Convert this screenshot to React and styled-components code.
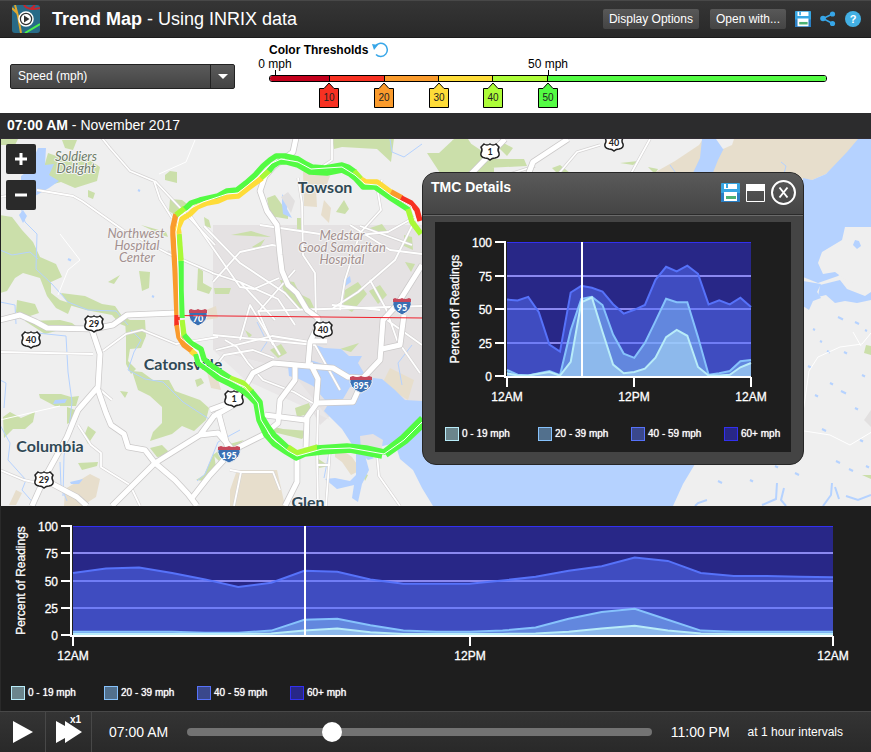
import React, { useState } from "react";
import styled, { createGlobalStyle } from "styled-components";

const GlobalStyle = createGlobalStyle`
  * { box-sizing: border-box; }
  body { margin: 0; background: #1e1e1e; font-family: "Liberation Sans", Arial, sans-serif; font-size: 12px; color: #fff; }
  button, select, input { font-family: inherit; margin: 0; }
`;

const Page = styled.div`
  display: flex;
  flex-direction: column;
  min-height: 100vh;
`;

const TopBar = styled.header`
  display: flex;
  align-items: center;
  height: 38px;
  padding: 0 10px 0 12px;
  background: linear-gradient(#353535, #292929);
  border-top: 1px solid #484848;
  border-bottom: 1px solid #1c1c1c;
`;

const Title = styled.h1`
  flex: 1;
  margin: 0 0 0 12px;
  font-size: 18px;
  white-space: nowrap;
  span { font-weight: 400; }
`;

const HeaderActions = styled.div`
  display: flex;
  gap: 11px;
  margin-right: 9px;
`;

const ToolButton = styled.button`
  height: 20px;
  padding: 0 6px;
  border: 0;
  border-radius: 2px;
  background: linear-gradient(#585858, #444);
  color: #fff;
  font-size: 12px;
  white-space: nowrap;
`;

const IconButton = styled.button`
  display: flex;
  padding: 0;
  border: 0;
  background: none;
`;

const HeaderIcons = styled.div`
  display: flex;
  align-items: center;
  gap: 9px;
`;

const Controls = styled.section`
  display: flex;
  height: 75px;
  padding: 0 44px 0 10px;
  background: #fff;
  color: #000;
`;

const Picker = styled.label`
  display: grid;
  grid-template-columns: 1fr 24px;
  align-self: flex-start;
  flex: none;
  width: 225px;
  height: 25px;
  margin: 26px 34px 0 0;
  border: 1px solid #222;
  border-radius: 2px;
  background: linear-gradient(#5a5a5a, #444);
`;

const PickerSelect = styled.select`
  grid-area: 1 / 1 / 2 / 3;
  appearance: none;
  padding: 0 7px 2px;
  border: 0;
  background: none;
  color: #fff;
  font-size: 12px;
`;

const PickerArrow = styled.span`
  grid-area: 1 / 2 / 2 / 3;
  display: flex;
  align-items: center;
  justify-content: center;
  border-left: 1px solid #222;
  pointer-events: none;
`;

const Thresholds = styled.div`
  flex: 1;
  min-width: 0;
  padding-top: 4px;
`;

const ThresholdTitle = styled.div`
  display: flex;
  align-items: center;
  gap: 4px;
  height: 16px;
  font-weight: 700;
`;

const scaleColumns = `grid-template-columns: 60fr 55fr 55fr 54fr 55fr 279fr;`;

const TickRow = styled.div`
  display: grid;
  ${scaleColumns}
  height: 17px;
`;

const ScaleTick = styled.div`
  grid-column: ${(p) => p.$column};
  justify-self: ${(p) => (p.$start ? "start" : "end")};
  display: flex;
  flex-direction: column;
  align-items: center;
  width: 48px;
  margin: ${(p) => (p.$start ? "0 0 0 -18px" : "0 -24px 0 0")};
  line-height: 12px;
  white-space: nowrap;
  &::after { content: ""; width: 1px; height: 5px; background: #000; }
`;

const ScaleBar = styled.div`
  display: grid;
  ${scaleColumns}
  height: 7px;
  border: 1px solid #000;
  border-radius: 3px;
  overflow: hidden;
`;

const Segment = styled.div`
  background: ${(p) => p.$color};
  border-right: ${(p) => (p.$last ? "0" : "1px solid #000")};
`;

const MarkerRow = styled.div`
  display: grid;
  ${scaleColumns}
`;

const Marker = styled.button`
  justify-self: end;
  display: grid;
  place-items: center;
  width: 20px;
  height: 26px;
  margin-right: -10px;
  padding: 0;
  border: 0;
  background: none;
  svg, span { grid-area: 1 / 1; }
  span { padding-top: 4px; font-size: 10px; color: #222; }
`;

const DateBar = styled.div`
  height: 26px;
  padding-left: 7px;
  background: #2c2c2d;
  border-bottom: 1px solid #332e35;
  font-size: 14px;
  line-height: 25px;
`;

const MapArea = styled.main`
  position: relative;
  display: flex;
  background: #efefef;
  border-left: 1px solid #222;
`;

const MapDrawing = styled.svg`
  display: block;
  width: 100%;
  font-family: Lato, sans-serif;
`;

const ZoomControls = styled.div`
  position: absolute;
  top: 5px;
  left: 5px;
  display: flex;
  flex-direction: column;
  gap: 6px;
`;

const ZoomButton = styled.button`
  display: grid;
  place-items: center;
  width: 30px;
  height: 30px;
  padding: 0;
  border: 0;
  border-radius: 2px;
  background: #2a2a2a;
`;

const Dialog = styled.section`
  position: absolute;
  top: 33px;
  right: 67px;
  width: 382px;
  border: 1px solid #262626;
  border-radius: 14px;
  background: #444;
`;

const DialogHeader = styled.header`
  display: flex;
  align-items: flex-start;
  height: 43px;
  padding: 7px 7px 0 8px;
  border-bottom: 1px solid #6a6a6a;
  border-radius: 13px 13px 0 0;
  background: linear-gradient(#5a5a5a, #444);
  box-shadow: inset 0 -1px #2b2b2b;
`;

const DialogTitle = styled.h2`
  flex: 1;
  margin: 0;
  font-size: 14px;
  line-height: 14px;
`;

const DialogTools = styled.div`
  display: flex;
  align-items: center;
  gap: 6px;
`;

const DialogBody = styled.div`
  margin: 6px 12px 12px;
  background: #1e1e1e;
`;

const TrendPanel = styled.section`
  flex: 1;
  border-left: 1px solid #2a2a2a;
  background: #1e1e1e;
`;

const ChartDrawing = styled.svg`
  display: block;
  width: 100%;
  text { fill: #fff; stroke: #fff; stroke-width: 0.3; font-size: 12px; }
`;

const LegendList = styled.ul`
  display: flex;
  margin: 0;
  padding: ${(p) => (p.$compact ? "15px 0 11px 10px" : "20px 0 11px 10px")};
  list-style: none;
`;

const LegendItem = styled.li`
  display: flex;
  align-items: center;
  gap: 3px;
  flex: none;
  width: 93px;
  &:last-child { width: auto; }
  font-size: 10px;
  line-height: 14px;
  white-space: nowrap;
  text-shadow: 0 0 1px #fff;
`;

const Swatch = styled.span`
  width: 14px;
  height: 14px;
  border: 1px solid ${(p) => p.$color};
  background: color-mix(in srgb, ${(p) => p.$color} 50%, #1e1e1e);
`;

const Player = styled.footer`
  display: flex;
  align-items: center;
  height: 41px;
  padding-right: 28px;
  border-top: 1px solid #484848;
  background: linear-gradient(#343434, #292929);
`;

const PlayerButton = styled.button`
  position: relative;
  display: grid;
  place-items: center;
  align-self: stretch;
  width: 46px;
  padding: 0;
  border: 0;
  border-right: 1px solid #484848;
  background: none;
`;

const SpeedBadge = styled.span`
  position: absolute;
  top: 2px;
  right: 10px;
  color: #fff;
  font-size: 10px;
  font-weight: 700;
`;

const PlayerTime = styled.output`
  margin: 0 ${(p) => p.$after}px 0 ${(p) => p.$before}px;
  font-size: 14px;
  white-space: nowrap;
`;

const TimeSlider = styled.input`
  flex: 1;
  min-width: 0;
  height: 20px;
  appearance: none;
  background: none;
  &::-webkit-slider-runnable-track { height: 8px; border-radius: 4px; background: #737373; }
  &::-webkit-slider-thumb { appearance: none; width: 20px; height: 20px; margin-top: -6px; border-radius: 50%; background: #fff; }
`;

const Interval = styled.span`
  white-space: nowrap;
`;

const BANDS = [
  { label: "0 - 19 mph", color: "#b8ecf9" },
  { label: "20 - 39 mph", color: "#86c2fc" },
  { label: "40 - 59 mph", color: "#5672fa" },
  { label: "60+ mph", color: "#3230f0" },
];

const REGION = [
  [1, 1, 1, 1, 1, 1, 1.5, 4, 6, 2.5, 1, 1, 1, 1, 1.5, 3, 6, 8.5, 4, 1.5, 1, 1, 1, 1],
  [3, 3, 3, 3, 2, 2, 4, 14, 15, 9, 4, 3, 3, 4, 7, 15, 21, 24, 14, 4, 3, 3, 3, 3],
  [57, 61, 62, 57, 51, 44, 48, 59, 58, 51, 47, 47, 47, 50, 53.5, 59, 63, 71, 68, 57, 54, 54, 53.5, 53],
];

const SEGMENT = [
  [2, 0.3, 0.3, 1.7, 3, 0.3, 10.5, 55, 58.6, 33, 8.5, 2, 3, 5.5, 13.7, 29, 34.4, 30, 6.7, 0.3, 0.3, 1, 6.5, 9.7],
  [4.5, 1, 0.3, 2, 3.7, 0.5, 34, 57.6, 59, 53, 31, 16.7, 13.5, 24.7, 41, 57.6, 55, 55, 29, 1, 2, 3.7, 11, 12],
  [57, 56.4, 59, 47.6, 23.4, 18.2, 62.3, 67.3, 65.8, 63, 53.6, 46.6, 49.4, 53, 71.8, 81.5, 78, 82.3, 76.3, 53.4, 56.4, 53.4, 58.4, 51.4],
];

function Legend({ compact }) {
  return (
    <LegendList $compact={compact}>
      {BANDS.map((b) => (
        <LegendItem key={b.label}><Swatch $color={b.color} />{b.label}</LegendItem>
      ))}
    </LegendList>
  );
}

function ReadingsChart({ width, height, left, right, top, bottom, titleX, series, hour }) {
  const x = (i) => left + ((right - left) * i) / 23;
  const y = (v) => bottom - ((bottom - top) * v) / 100;
  const gridY = (v) => Math.round(y(v));
  const line = (values) => values.map((v, i) => `${x(i).toFixed(1)},${y(v).toFixed(1)}`).join(" ");
  const band = (i) => (
    <g key={i}>
      <polygon points={`${left},${bottom} ${line(series[i])} ${right},${bottom}`} fill={BANDS[i].color} fillOpacity="0.5" />
      <polyline points={line(series[i])} fill="none" stroke={BANDS[i].color} strokeWidth="2" />
    </g>
  );
  return (
    <ChartDrawing viewBox={`0 0 ${width} ${height}`} role="img" aria-label="Percent of readings by hour">
      <rect x={left} y={top} width={right - left} height={bottom - top} fill={BANDS[3].color} fillOpacity="0.5" />
      <path d={`M${left} ${top + 0.5}H${right}`} stroke={BANDS[3].color} />
      {[25, 50, 75].map((v) => <path key={v} d={`M${left} ${gridY(v)}H${right}`} stroke="#8b88f0" strokeWidth="2" />)}
      {[2, 1, 0].map(band)}
      <g stroke="#fff" strokeWidth="2" fill="none">
        <path d={`M${left - 2} ${top - 1}V${bottom + 1}H${right}`} />
        {[0, 25, 50, 75, 100].map((v) => <path key={v} d={`M${left - 12} ${gridY(v)}H${left - 2}`} />)}
        {[0, 12, 23].map((i) => <path key={i} d={`M${Math.round(x(i))} ${bottom + 1}V${bottom + 11}`} />)}
        <path d={`M${Math.ceil(x(hour))} ${top}V${bottom}`} />
      </g>
      {[0, 25, 50, 75, 100].map((v) => (
        <text key={v} x={left - 15} y={gridY(v) + 5} textAnchor="end">{v}</text>
      ))}
      {[[0, "12AM"], [12, "12PM"], [23, "12AM"]].map(([i, t]) => (
        <text key={i} x={Math.round(x(i))} y={bottom + 25} textAnchor="middle">{t}</text>
      ))}
      <text transform={`translate(${titleX} ${(top + bottom) / 2}) rotate(-90)`} textAnchor="middle">Percent of Readings</text>
    </ChartDrawing>
  );
}

function SaveIcon({ size }) {
  return (
    <svg width={size} height={size} viewBox="0 0 19 19" aria-hidden="true">
      <rect width="19" height="19" rx="1" fill="#37a6e2" />
      <path d="M0 10h19v8q0 1-1 1H1q-1 0-1-1z" fill="#2a7fc4" />
      <path d="M3 1h13v5H3zM3 9h13v9H3z" fill="#fff" />
      <path d="M5 1h2v4H5z" fill="#37a6e2" />
      <path d="M5 13h10v3H5z" fill="#4db273" />
    </svg>
  );
}

function AppIcon() {
  return (
    <svg width="28" height="28" viewBox="0 0 28 28" aria-hidden="true">
      <defs><clipPath id="logo"><rect width="28" height="28" rx="3" /></clipPath></defs>
      <g clipPath="url(#logo)" fill="none">
        <rect width="28" height="28" fill="#286a87" />
        <path d="M12 0q4 6 16 3M19 4l4-4" stroke="#c7252c" strokeWidth="2" />
        <path d="M3 0l3 11 3 17M0 3l5 5" stroke="#e0a82e" strokeWidth="2" />
        <path d="M13 28l15-9" stroke="#4df04d" strokeWidth="2" />
      </g>
      <circle cx="14" cy="14" r="7" fill="#333" stroke="#fff" strokeWidth="1.5" />
      <circle cx="14" cy="14" r="5" fill="#fff" />
      <path d="M12 10.500v7l5.500-3.500z" fill="#333" />
    </svg>
  );
}

const THRESHOLDS = [
  { color: "#c4001c" },
  { at: 10, color: "#f73122" },
  { at: 20, color: "#fa9b2c" },
  { at: 30, color: "#fedc38" },
  { at: 40, color: "#adfd38" },
  { at: 50, color: "#53fb43" },
];

const G = "#53fb43", L = "#a9f938", Y = "#fedc38", O = "#fa9b2c", R = "#f73122";

const ROUTES = [
  [O, "M177 315L176 290 175 268 173 235 173 227 176 214"],
  [L, "M176 215L185 208"],
  [G, "M185 209L191 203 200 200 218 196 227 191 237 190 246 183 255 175 263 166 270 160 276 156 285 156 298 159 306 164 312 167 325 168 342 165 348 167 355 172"],
  [L, "M354 171L361 179"],
  [Y, "M361 179L366 182 377 182 392 193"],
  [O, "M391 192L402 198"],
  [R, "M401 198L411 203 417 210 420 221"],
  [G, "M182 318L181 290 181 261"],
  [L, "M181 261L179 234"],
  [Y, "M179 234L178 228 182 219 190 214 197 207 207 203 218 201 227 197 238 196 247 189 262 178"],
  [L, "M261 178L270 170"],
  [G, "M269 171L273 166 279 162 287 162 298 165 310 172 327 173 342 170 350 174 355 178 363 187 375 187 392 199 409 210"],
  [L, "M408 209L412 222 421 234"],
  [R, "M177 315V326"],
  [O, "M177 325L179 337 184 345 192 351"],
  [Y, "M191 351L196 355"],
  [G, "M196 354L198 363 208 370 218 378 230 384 243 391 250 397 256 403 259 420 266 435 274 444 286 452 296 458 305 454 322 452 350 450 366 453 382 456"],
  [L, "M182 320L184 336"],
  [G, "M184 335L191 343 201 349 204 359 212 366 230 378"],
  [L, "M230 378L243 383 252 392"],
  [G, "M251 391L260 402 262 417 268 427 274 435 288 448"],
  [L, "M288 447L297 453 318 447"],
  [G, "M317 448L347 446 366 448 384 452 402 438 422 418"],
  [G, "M386 455L406 441 423 425"],
];

const MINOR = [
  "M102 138L110 148 130 171 154 181 160 199 172 218",
  "M37 190L73 196 82 201 123 230 167 253 213 273",
  "M0 197L36 191M155 181L170 197 215 245",
  "M190 215L240 287 254 289 279 278",
  "M204 226L240 263 285 293 300 310",
  "M213 282L240 252 272 245 278 246",
  "M212 273L240 282 278 299 295 325M240 282L275 320",
  "M260 225L340 237 388 232 415 217M298 178L302 203 303 255 315 273 316 318",
  "M332 139V160L320 168M382 180L378 193 381 210 360 233 345 280 340 310",
  "M416 218L395 260 358 292 333 308M412 245L360 226",
  "M258 311L423 306M258 311L273 345M332 305L380 310",
  "M370 280L386 309 397 340 420 373M387 320L422 345",
  "M0 352L93 354M103 351L126 334 142 330 176 344 218 337",
  "M78 425L91 445 101 453 101 467 130 485 140 506",
  "M0 470L24 480 42 484M112 400L97 387",
  "M225 340L237 347 248 363 263 380 294 392 316 405",
  "M210 373L224 355 253 350 274 358M216 350L272 336 310 342",
  "M230 470L241 472 273 472 280 490M241 472L234 506",
  "M318 410L317 450 318 506M330 450L326 506M318 465H330",
  "M377 455L379 476 400 506",
  "M555 178L577 152 600 145M650 139L622 190M510 174L535 166",
  "M280 355L250 305 240 340M213 335L315 345 340 390",
  "M260 310L295 270M350 225L390 250 422 254",
];

const MAJOR = [
  "M296 138L293 152 273 167 265 176 260 191 267 211 277 225 280 255 282 271 288 285 297 293 307 310 318 318V325L310 342 308 365",
  "M0 320L20 315 36 322 47 328 93 329 113 325 127 315 175 313",
  "M92 330L100 354 98 387 78 410 67 437 45 477 32 506M45 480L77 497 87 506",
  "M97 387L106 413 111 425 124 434 128 447 145 450 155 463 175 480 188 494 197 506",
  "M112 506L155 463 200 435 214 416 237 403M200 435L218 433 231 448",
  "M192 498L210 475 233 450 263 435 278 423 280 400 295 380V366",
  "M255 398L243 390 253 373 273 363 308 366 333 368 348 377 363 378 380 360 383 320 397 305 422 265",
  "M404 315L400 345 382 349M210 410L237 400M218 411L228 449",
  "M265 415L305 420 317 403 353 402 363 380",
  "M307 418L306 447M297 457V482L285 506",
  "M327 341H310M310 363L318 379 316 405",
  "M505 139L470 175M568 139L533 162 528 175",
];

const PARKS = [
  "M62 140h15l-4 10-8-2zM48 153l14 5 20-3 18 12-3 14-22 7-14-6-11 3-8-11zM0 139h18l-3 6H0zM88 190l7 3-2 6-5-2z",
  "M0 215l12 2 10 13 11 12 7 15 16 7 6 13-11 5 0 11 9 7 12 4-4 10-12-6-9-12-7-18-17-5-8 5-8 13-7 2z",
  "M61 293l24 3 17 8 13 2 7 10 12 6-1 7-13-5-8-9-26-5-17-5z",
  "M17 300l18 4 4 9-15 5-8-6zM165 175l5-4 7 1v11l-12-3zM139 271l11 1-1 16-7 3zM170 199l12 1 9 7-13 10-9-6z",
  "M198 268l5 3 0 12 9 5-3 6-12-4zM204 217l5 3 2 8-6-2zM108 282l12-7-6 9zM141 225l25 7 2 5-6-2z",
  "M45 334l-20-13 35-1 12 3 10 8-26 0zM125 320h20l1 16-5 12-11 1-2 12 8 8-5 5-5-10 0-28z",
  "M3 417l7-5 11 6 14-6-2 10-8 7-12 0-9 9zM39 394l22 0 10 3 8-1-3 10-21 0-15-8zM67 407l8 3 0 10-8 4z",
  "M132 371l10 1 11 8 16 0 6 11 25 9 9 8-3 12-12 11-12-5-10 8-22 7 3-9 9-9 0-16-12-11-12-6z",
  "M150 448l12-3 10 10-15 2zM88 426l8 6-8 12-4-8zM120 391l8 1-3 6zM195 380l6-2 3 5-7 4zM78 463l20-1-1 4-15 4zM81 483l5 3-1 8-4-2z",
  "M196 480l8-5 10-22 2 15-12 13zM267 198l8-3 13 18 0 6-18-3zM344 200l5 9-4 5-9-2zM297 218h6v12l-6-1z",
  "M332 138h62l-3 24-14-13-35-2-8 2zM280 280l14 2 6 12 10 5 6 13-12-1-18-14zM345 290l13-8 9 12-15 18-9-5z",
  "M380 285l7 10-9 9-9-13zM231 235l20-4 20 6-20-1zM252 247l13-8-6 10zM214 288l17 0-2 6-14 0zM370 228l12-4 5 7-15 0z",
  "M270 350l11-6 6 9-9 5zM340 349l19-6-8 9zM295 408l14-5 3 10-15 4zM261 424l22 5 26 2-7 8-25-6z",
  "M213 455l13-10 18-5-12 9-13 12zM317 458l12 8-10 2zM380 492l6 3-6 4zM362 472l6 3-3 6zM245 330l7 5-3 3z",
  "M427 153h12l15-14h14l8 12 18 4 0 17-12 8-22-6-18 2zM452 140l18 3 24 16 30 0 3 7-40 2zM500 141l13 7-6 8-8-8z",
  "M552 168l8-3 10 8-10 3zM620 163l18-2-5 4zM648 167l10 2-3 5zM405 262l10 2-4 8zM404 235l8 2 1 13-9-4zM866 345l5 1v9l-7-2zM862 475h9v4z",
];

const SAND = [
  "M65 489l25-15 10 5-4 18-14 9-18 0zM303 172l14-3 13 7-4 11-10 2 1 18-13-1zM324 200l7 8-2 15-8-8zM207 372l10 4 4 14-10-2z",
  "M237 470h40l8 36h-55l0-16zM390 368l24 12-6 20-26-16zM364 424l10 5 1 10-11-1zM206 310l10-4 2 12-12 2zM16 490l6 3-6 12h-7z",
  "M645 178L675 161 699 145 703 139H859L847 154 826 174 812 180 800 178ZM335 445l17 12 9 13-10 5-9-13-7-5z",
];

const WATER = [
  "M871 139H858L847 152 826 174 812 180 803 178V277L818 283 838 276 871 250Z",
  "M702 139H718L724 148 718 160 712 175H692L700 158Z",
  "M803 281l18 3-4 8 4 6-8 3-4 9-6-4z",
  "M820 285l20-5 7 9 18 7 6-4v8l-14 3-12-2-10 2-9-8-8 2z",
  "M316 345l8 3 17 1 8 7 13 0-4 7 9 15 2 10-19-1-7 12-18 1-12-14-14-7-10-3-1-10 9-2 17 6 14-3-10-14z",
  "M364 377l18 2 13 11 10 10 17 1 13 25v38h260l-12 20-10 22-250 0-6-20-17-24-9-9-23 7-15-14-11-17-18-18 5-8 20-1z",
  "M310 360l16 5 7 9-3 15-12-3-15-16zM356 435l7 13 6 22-7 14-4 18-6-4 2-13-17 4-12-10 10-1 15 3 6-6z",
  "M38 148h8l-1 17 9-1-5 11 10 6-10 7-14 8-7-2-2-13-5 4 0-9 7-5zM23 210l4 6-4 7-4-8zM282 194l6 8-1 7 5 9-9-4-1-10z",
  "M343 281l7-5 1 6-7 5zM55 400l12-1-2 4-12 1zM70 482l13-3-4 5-8 0z",
];

const CREEKS = [
  "M19 200l6 22 12 12-1 35 16 15 16 18 20 8 28 1 12 14M0 250l12 5 18-3 8 7",
  "M37 333l29 3 2 36 4 30-3 26-5 28-1 40M0 425l10 18-2 17 18 20-4 10 14 16M131 330l10 10-7 12-6 18 17 9 18 3 20 20 26 17",
  "M0 302l15 3 1 19M0 380l6 3-2 25M60 462l1 24 6 15M240 430l-22 12-13 32-8 7M330 448l-6 30M412 345l-14 18 4 22",
  "M257 322l10 20-8 12M390 139l2 13 12 5 18-13M678 176l-8-11M784 174l2-8-5-4",
];

const PONDS = [
  [700, 460, 4], [838, 317, 5], [855, 322, 4], [808, 366, 3], [844, 352, 3], [841, 391, 5], [822, 429, 4], [750, 480, 3],
  [855, 408, 3], [820, 341, 2], [830, 383, 3], [849, 469, 4], [866, 466, 3], [718, 481, 4], [775, 466, 3], [860, 440, 3], [827, 351, 3],
  [813, 329, 2], [865, 330, 2], [836, 461, 4], [795, 473, 4], [68, 259, 3], [138, 190, 2], [152, 296, 2], [862, 375, 3], [815, 395, 3],
];

const LABELS = [
  [76, 161, "Soldiers", "park"], [76, 173, "Delight", "park"],
  [136, 238, "Northwest", "place"], [137, 250, "Hospital", "place"], [137, 262, "Center", "place"],
  [342, 240, "Medstar", "place"], [342, 252, "Good Samaritan", "place"], [342, 264, "Hospital", "place"],
  [325, 193, "Towson", "city"], [183, 370, "Catonsville", "city"], [50, 452, "Columbia", "city"], [308, 508, "Glen", "city"],
];

const US_SHIELDS = [[490, 152, 1], [614, 143, 40], [94, 324, 29], [31, 340, 40], [323, 330, 40], [234, 399, 1], [44, 480, 29]];
const INTERSTATES = [[198, 317, 70], [402, 306, 95], [361, 384, 895], [229, 454, 195]];

const MapLabel = styled.text`
  text-anchor: middle;
  paint-order: stroke;
  stroke: #f4f4f4;
  stroke-width: 2;
  stroke-linejoin: round;
  font-size: ${(p) => (p.$kind === "city" ? 16 : 13)}px;
  font-weight: ${(p) => (p.$kind === "city" ? 700 : 400)};
  font-style: ${(p) => (p.$kind === "city" ? "normal" : "italic")};
  fill: ${(p) => ({ city: "#304956", park: "#6d7c68", place: "#a3908f" })[p.$kind]};
`;

function TrafficMap() {
  return (
    <MapDrawing viewBox="1 139 870 367" role="img" aria-label="Baltimore traffic map">
      <rect x="0" y="139" width="871" height="367" fill="#efefef" />
      <path d="M213 225H423V430L395 412 342 405 320 425 290 370 213 350Z" fill="#e5e2e3" />
      <path d="M213 350L290 370 330 420 300 405 245 380Z" fill="#e9e7e8" />
      <g fill="#cbdfaa">{PARKS.map((d) => <path key={d} d={d} />)}</g>
      <g fill="#e7decc">{SAND.map((d) => <path key={d} d={d} />)}</g>
      <g fill="#b5d2ff">{WATER.map((d) => <path key={d} d={d} />)}</g>
      <path d="M871 227H845L842 240 822 252 818 263 823 274 835 272 850 283 871 282ZM716 139h18l-2 6-9 4z" fill="#efefef" />
      <path d="M855 240l4 1 2 5-4 3-4-4z" fill="#b5d2ff" />
      <path d="M375 448l20-5 5 16 13 11 9 18 11 18h-72l7-10 6-23 6-7-9-11z" fill="#efefef" />
      <path d="M360 436l13-2 10 6-2 13-20-3z" fill="#e5e2e3" />
      <path d="M871 410l-7 10 7 7zM281 197l7-5 7 9-4 12zM168 250l4 2-5 3z" fill="#e2e0e0" />
      <g fill="none" stroke="#b5d2ff">{CREEKS.map((d) => <path key={d} d={d} />)}</g>
      <g stroke="#b5d2ff" strokeWidth="2">{PONDS.map(([x, y, n]) => <path key={`${x}-${y}`} d={`M${x} ${y}l${n} ${n / 2}`} />)}</g>
      <g fill="none" stroke="#b5d2ff" strokeWidth="2">
        <path d="M777 483l-1 16-14 6M784 488l-3 12 5 6M832 483l-1 12-8 11M835 487l4 12M846 496l12 4 13-5M707 500l-9 3-3 3" />
      </g>
      <g fill="none" stroke="#fff">
        <path d="M871 333l-9 11-22 3-22 10-9 14-5 35-6 24 32 5 20 10 25-15M861 346l-8-14M60 234l20 26-12 10-10 25M0 420l60-14M195 140l-9 22-27 12M424 330v50" />
      </g>
      <g fill="none" strokeLinejoin="round">
        <g stroke="#d5d3d3" strokeWidth="3">{MINOR.map((d) => <path key={d} d={d} />)}</g>
        <g stroke="#fff" strokeWidth="1.8">{MINOR.map((d) => <path key={d} d={d} />)}</g>
        <g stroke="#cbc9c9" strokeWidth="6.5">{MAJOR.map((d) => <path key={d} d={d} />)}</g>
        <g stroke="#fff" strokeWidth="5">{MAJOR.map((d) => <path key={d} d={d} />)}</g>
      </g>
      {LABELS.map(([x, y, t, kind]) => <MapLabel key={t + y} x={x} y={y} $kind={kind}>{t}</MapLabel>)}
      {US_SHIELDS.map(([x, y, n]) => (
        <g key={`${x}-${y}`} transform={`translate(${x} ${y})`}>
          <path d="M-6-8Q-3-6 0-8Q3-6 6-8L9-5Q7-2 9 1Q10 5 5 6Q2 6 0 8Q-2 6-5 6Q-10 5-9 1Q-7-2-9-5Z" fill="#fff" stroke="#222" strokeWidth="1.5" />
          <text y="3" textAnchor="middle" fontSize="9" fontWeight="700" fill="#222">{n}</text>
        </g>
      ))}
      {INTERSTATES.map(([x, y, n]) => (
        <g key={n} transform={`translate(${x} ${y})`}>
          <path d={n > 99 ? "M-11-6Q-13 4 0 9Q13 4 11-6Z" : "M-9-6Q-11 4 0 9Q11 4 9-6Z"} fill="#3a70b3" stroke="#f4f4f4" />
          <path d={n > 99 ? "M-11-7L-8-8Q-4-6 0-8Q4-6 8-8L11-7V-4H-11Z" : "M-9-7L-7-8Q-3-6 0-8Q3-6 7-8L9-7V-4H-9Z"} fill="#c5485b" />
          <text y="5" textAnchor="middle" fontSize="9" fontWeight="900" fill="#fff">{n}</text>
        </g>
      ))}
      <path d="M176 315.500L423 318" stroke="#f0202c" />
      <g fill="none" strokeWidth="5.5" strokeLinejoin="round">
        {ROUTES.map(([color, d]) => <path key={d} d={d} stroke={color} />)}
      </g>
      <g fill="none" stroke="#fff">
        <path d="M179 317L178 268 176 232 179 217 191 208 203 202 227 194 238 193 258 177 272 163 281 159 298 162 311 169 342 167 355 175 365 184 377 185 392 196 411 206 417 222" />
        <path d="M179 320L181 338 198 352 201 362 221 376 245 387 258 403 261 420 272 438 288 451 297 456 322 449 350 448 384 454 404 440 422 422" />
      </g>
    </MapDrawing>
  );
}

export default function App() {
  const [hour, setHour] = useState(7);
  return (
    <Page>
      <GlobalStyle />
      <TopBar>
        <AppIcon />
        <Title>Trend Map <span>- Using INRIX data</span></Title>
        <HeaderActions>
          <ToolButton>Display Options</ToolButton>
          <ToolButton>Open with...</ToolButton>
        </HeaderActions>
        <HeaderIcons>
          <IconButton aria-label="Save"><SaveIcon size={16} /></IconButton>
          <IconButton aria-label="Share">
            <svg width="16" height="16" viewBox="0 0 16 16" fill="#37a6e8">
              <path d="M12.500 3L3 7.500l9.500 5" fill="none" stroke="#37a6e8" strokeWidth="1.500" />
              <circle cx="12.500" cy="3" r="2.600" /><circle cx="3" cy="7.500" r="2.800" /><circle cx="12.500" cy="12.500" r="2.600" />
            </svg>
          </IconButton>
          <IconButton aria-label="Help">
            <svg width="16" height="16" viewBox="0 0 16 16">
              <circle cx="8" cy="8" r="8" fill="#43b0e4" />
              <text x="8" y="12" textAnchor="middle" fontSize="11" fontWeight="700" fill="#fff">?</text>
            </svg>
          </IconButton>
        </HeaderIcons>
      </TopBar>

      <Controls>
        <Picker>
          <PickerSelect aria-label="Metric"><option>Speed (mph)</option></PickerSelect>
          <PickerArrow><svg width="10" height="5" viewBox="0 0 10 5"><path d="M0 0h10L5 5z" fill="#fff" /></svg></PickerArrow>
        </Picker>
        <Thresholds>
          <ThresholdTitle>
            Color Thresholds
            <IconButton aria-label="Reset thresholds">
              <svg width="17" height="16" viewBox="0 0 17 16">
                <path d="M3 4.500A6.600 6.600 0 1 1 4 12.500" fill="none" stroke="#37a6e8" strokeWidth="1.500" />
                <path d="M0 2l6 1-4 5z" fill="#37a6e8" />
              </svg>
            </IconButton>
          </ThresholdTitle>
          <TickRow>
            <ScaleTick $column={1} $start>0 mph</ScaleTick>
            <ScaleTick $column={5}>50 mph</ScaleTick>
          </TickRow>
          <ScaleBar>
            {THRESHOLDS.map((t, i) => <Segment key={t.color} $color={t.color} $last={i === 5} />)}
          </ScaleBar>
          <MarkerRow>
            {THRESHOLDS.slice(1).map((t) => (
              <Marker key={t.at}>
                <svg width="20" height="26" viewBox="0 0 20 26">
                  <path d="M.5 6.500H5L10 1l5 5.500h4.500v19H.5z" fill={t.color} stroke="#000" />
                </svg>
                <span>{t.at}</span>
              </Marker>
            ))}
          </MarkerRow>
        </Thresholds>
      </Controls>

      <DateBar><strong>07:00 AM</strong> - November 2017</DateBar>

      <MapArea>
        <TrafficMap />
        <ZoomControls>
          <ZoomButton aria-label="Zoom in"><svg width="14" height="14"><path d="M7 1v12M1 7h12" stroke="#fff" strokeWidth="3" /></svg></ZoomButton>
          <ZoomButton aria-label="Zoom out"><svg width="14" height="14"><path d="M1 7h12" stroke="#fff" strokeWidth="3" /></svg></ZoomButton>
        </ZoomControls>
        <Dialog aria-label="TMC Details">
          <DialogHeader>
            <DialogTitle>TMC Details</DialogTitle>
            <DialogTools>
              <IconButton aria-label="Save chart"><SaveIcon size={19} /></IconButton>
              <IconButton aria-label="Maximize">
                <svg width="19" height="18"><path d="M.5.5h18v17H.5z" fill="none" stroke="#fff" /><path d="M0 0h19v7H0z" fill="#fff" /></svg>
              </IconButton>
              <IconButton aria-label="Close">
                <svg width="25" height="25"><circle cx="12.500" cy="12.500" r="11.500" fill="none" stroke="#fff" strokeWidth="2" /><path d="M8.500 7.500l8 10M16.500 7.500l-8 10" stroke="#fff" strokeWidth="2" /></svg>
              </IconButton>
            </DialogTools>
          </DialogHeader>
          <DialogBody>
            <ReadingsChart width={356} height={190} left={72} right={316} top={20} bottom={154} titleX={24} series={SEGMENT} hour={hour} />
            <Legend compact />
          </DialogBody>
        </Dialog>
      </MapArea>

      <TrendPanel>
        <ReadingsChart width={870} height={160} left={72} right={832} top={20} bottom={129} titleX={24} series={REGION} hour={hour} />
        <Legend />
      </TrendPanel>

      <Player>
        <PlayerButton aria-label="Play"><svg width="20" height="22"><path d="M0 0l20 11L0 22z" fill="#fff" /></svg></PlayerButton>
        <PlayerButton aria-label="Fast forward">
          <svg width="26" height="22"><path d="M0 0l9 5V0l17 11L9 22v-5l-9 5z" fill="#fff" /></svg>
          <SpeedBadge>x1</SpeedBadge>
        </PlayerButton>
        <PlayerTime $before={17} $after={19}>07:00 AM</PlayerTime>
        <TimeSlider type="range" min="0" max="23" value={hour} onChange={(e) => setHour(Number(e.target.value))} aria-label="Time of day" />
        <PlayerTime $before={19} $after={18}>11:00 PM</PlayerTime>
        <Interval>at 1 hour intervals</Interval>
      </Player>
    </Page>
  );
}
